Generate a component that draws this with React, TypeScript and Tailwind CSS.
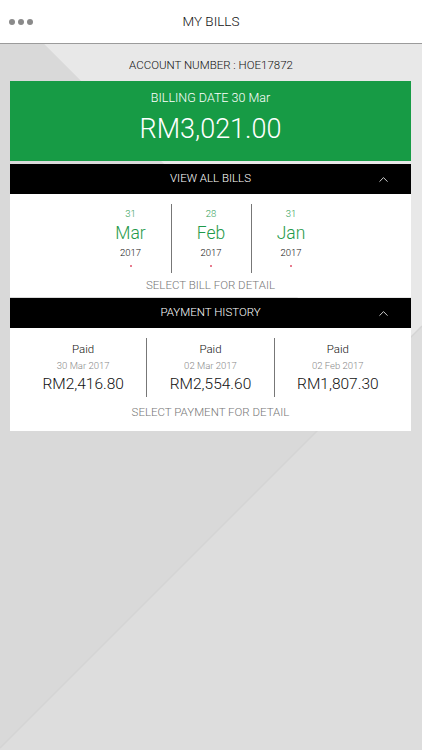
import React from 'react';
import { ChevronUp } from 'lucide-react';

const bills = [
  { day: '31', month: 'Mar', year: '2017' },
  { day: '28', month: 'Feb', year: '2017' },
  { day: '31', month: 'Jan', year: '2017' },
];

const payments = [
  { date: '30 Mar 2017', amount: 'RM2,416.80' },
  { date: '02 Mar 2017', amount: 'RM2,554.60' },
  { date: '02 Feb 2017', amount: 'RM1,807.30' },
];

const font = { fontFamily: 'Roboto, Lato, sans-serif' };

const SectionBar: React.FC<{ title: string }> = ({ title }) => (
  <div className="relative h-[30px] bg-black flex items-center justify-center">
    <span className="text-[11.5px] text-white">{title}</span>
    <ChevronUp className="absolute right-[20px] top-[8px] w-[15px] h-[15px] text-white" strokeWidth={1.3} />
  </div>
);

const Background = () => (
  <svg className="absolute inset-0 w-full h-full" viewBox="0 0 422 750" preserveAspectRatio="none">
    <rect width="422" height="750" fill="#dddddd" />
    <polygon points="44,44 422,44 422,326 374,374" fill="#e8e8e8" />
    <polygon points="0,44 44,44 374,374 0,748" fill="#d9d9d9" />
    <line x1="374" y1="374" x2="0" y2="748" stroke="#d4d4d4" strokeWidth="1.5" />
    <line x1="374" y1="374" x2="422" y2="326" stroke="#d4d4d4" strokeWidth="1.5" />
  </svg>
);

export default function App() {
  return (
    <div className="relative w-[422px] h-[750px] overflow-hidden font-light" style={font}>
      <Background />
      <div className="relative">
        <header className="relative h-[44px] bg-white border-b border-[#9b9b9b] flex items-center justify-center">
          <div className="absolute left-[9px] top-[19px] flex gap-[3px]">
            <span className="w-[6px] h-[6px] rounded-full bg-[#8a8a8a]" />
            <span className="w-[6px] h-[6px] rounded-full bg-[#8a8a8a]" />
            <span className="w-[6px] h-[6px] rounded-full bg-[#8a8a8a]" />
          </div>
          <h1 className="text-[13.5px] text-[#111]">MY BILLS</h1>
        </header>

        <div className="pt-[13px] pb-[8px] text-center text-[11.5px] leading-[16px] text-[#111]">
          ACCOUNT NUMBER : HOE17872
        </div>

        <div className="ml-[10px] mr-[11px]">
          <div className="h-[80px] bg-[#179b45] flex flex-col items-center text-white">
            <div className="mt-[8px] text-[12.5px] leading-[18px]">BILLING DATE 30 Mar</div>
            <div className="mt-[4px] text-[27px] leading-[36px]">RM3,021.00</div>
          </div>

          <div className="mt-[3px]">
            <SectionBar title="VIEW ALL BILLS" />
          </div>
          <div className="bg-white h-[103px] pt-[10px]">
            <div className="flex justify-center">
              {bills.map((b, i) => (
                <div
                  key={b.month}
                  className={`w-[80px] h-[69px] flex flex-col items-center ${i > 0 ? 'border-l border-[#777]' : ''}`}
                >
                  <div className="text-[9.5px] leading-[12px] text-[#2e9e55] mt-[4px]">{b.day}</div>
                  <div className="text-[17.5px] leading-[22px] text-[#1f9a4a] mt-[2px]">{b.month}</div>
                  <div className="text-[9.5px] leading-[12px] text-[#111] mt-[3px]">{b.year}</div>
                  <div className="w-[2px] h-[2px] rounded-full bg-[#e0516a] mt-[6px]" />
                </div>
              ))}
            </div>
            <div className="text-center text-[11.5px] leading-[16px] text-[#777] mt-[4px]">
              SELECT BILL FOR DETAIL
            </div>
          </div>

          <div className="mt-[1px]">
            <SectionBar title="PAYMENT HISTORY" />
          </div>
          <div className="bg-white h-[103px] pt-[10px]">
            <div className="flex px-[10px]">
              {payments.map((p, i) => (
                <div
                  key={p.date}
                  className={`flex-1 h-[59px] flex flex-col items-center ${i > 0 ? 'border-l border-[#777]' : ''}`}
                >
                  <div className="text-[11.5px] leading-[14px] text-[#111] mt-[4px]">Paid</div>
                  <div className="text-[9.5px] leading-[12px] text-[#888] mt-[4px]">{p.date}</div>
                  <div className="text-[15.5px] leading-[20px] text-[#111] mt-[2px]">{p.amount}</div>
                </div>
              ))}
            </div>
            <div className="text-center text-[11.5px] leading-[16px] text-[#777] mt-[7px]">
              SELECT PAYMENT FOR DETAIL
            </div>
          </div>
        </div>
      </div>
    </div>
  );
}
